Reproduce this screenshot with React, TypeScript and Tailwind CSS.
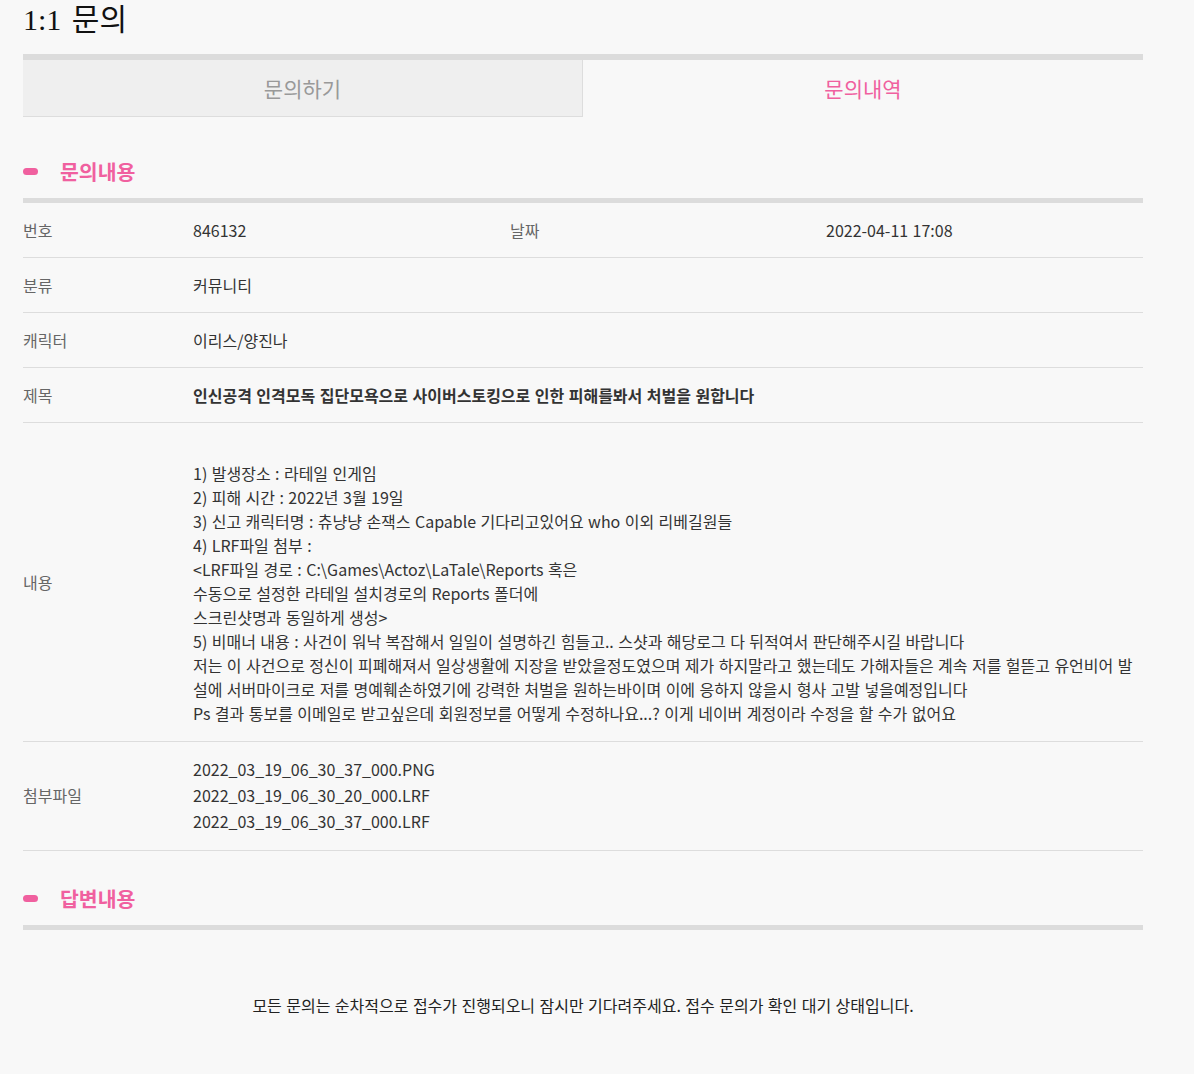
import React from "react";

const PINK = "text-[#f0609f]";

function SectionHeader({ title, className }: { title: string; className?: string }) {
  return (
    <div className={className}>
      <div className="h-[52px] flex items-center pb-[2px]">
        <span className="w-[15px] h-[7px] rounded-full bg-[#f0609f] mr-[22px]" />
        <span className={`text-[20.5px] font-bold ${PINK}`}>{title}</span>
      </div>
      <div className="h-[5px] bg-[#dcdcdc]" />
    </div>
  );
}

function Row({ label, children, className }: { label: string; children: React.ReactNode; className?: string }) {
  return (
    <div className={`flex items-center border-b border-[#dddddd] ${className ?? "h-[55px]"}`}>
      <div className="w-[170px] shrink-0 text-[#666]">{label}</div>
      <div className="flex-1 min-w-0 text-[#333]">{children}</div>
    </div>
  );
}

const contentLines = [
  "1) 발생장소 : 라테일 인게임",
  "2) 피해 시간 : 2022년 3월 19일",
  "3) 신고 캐릭터명 : 츄냥냥 손잭스 Capable 기다리고있어요 who 이외 리베길원들",
  "4) LRF파일 첨부 :",
  "<LRF파일 경로 : C:\\Games\\Actoz\\LaTale\\Reports 혹은",
  "수동으로 설정한 라테일 설치경로의 Reports 폴더에",
  "스크린샷명과 동일하게 생성>",
  "5) 비매너 내용 : 사건이 워낙 복잡해서 일일이 설명하긴 힘들고.. 스샷과 해당로그 다 뒤적여서 판단해주시길 바랍니다",
  "저는 이 사건으로 정신이 피폐해져서 일상생활에 지장을 받았을정도였으며 제가 하지말라고 했는데도 가해자들은 계속 저를 헐뜯고 유언비어 발",
  "설에 서버마이크로 저를 명예훼손하였기에 강력한 처벌을 원하는바이며 이에 응하지 않을시 형사 고발 넣을예정입니다",
  "Ps 결과 통보를 이메일로 받고싶은데 회원정보를 어떻게 수정하나요...? 이게 네이버 계정이라 수정을 할 수가 없어요",
];

const files = [
  "2022_03_19_06_30_37_000.PNG",
  "2022_03_19_06_30_20_000.LRF",
  "2022_03_19_06_30_37_000.LRF",
];

export default function App() {
  return (
    <div
      className="min-h-[1074px] bg-[#f8f8f8] text-[16px] [word-spacing:0.85px]"
      style={{ fontFamily: '"Noto Sans CJK KR", "Noto Sans", sans-serif' }}
    >
      <div className="w-[1120px] ml-[23px] pb-[56px]">
        <h1
          className="text-[30px] leading-[40px] text-[#111] mb-[14px] [word-spacing:3px]"
          style={{ fontFamily: '"Liberation Serif", "Noto Sans CJK KR", serif' }}
        >
          1:1 문의
        </h1>

        <div className="border-t-[6px] border-[#dcdcdc] grid grid-cols-2">
          <div className="h-[57px] bg-[#efefef] border-r border-b border-[#dddddd] flex items-center justify-center text-[21px] text-[#999] pt-[2px]">
            문의하기
          </div>
          <div className={`h-[57px] flex items-center justify-center text-[21px] ${PINK}`}>문의내역</div>
        </div>

        <SectionHeader title="문의내용" className="mt-[29px]" />

        <div className="flex items-center h-[55px] border-b border-[#dddddd]">
          <div className="w-[170px] shrink-0 text-[#666]">번호</div>
          <div className="w-[317px] shrink-0 text-[#333]">846132</div>
          <div className="w-[316px] shrink-0 text-[#666]">날짜</div>
          <div className="flex-1 text-[#333]">2022-04-11 17:08</div>
        </div>
        <Row label="분류">커뮤니티</Row>
        <Row label="캐릭터">이리스/양진나</Row>
        <Row label="제목">
          <span className="font-bold">인신공격 인격모독 집단모욕으로 사이버스토킹으로 인한 피해를봐서 처벌을 원합니다</span>
        </Row>
        <Row label="내용" className="pt-[15px] pb-[16px]">
          <div className="leading-[24px] pt-[23px]">
            {contentLines.map((l, i) => (
              <div key={i} className="whitespace-nowrap">
                {l}
              </div>
            ))}
          </div>
        </Row>
        <Row label="첨부파일" className="pt-[14px] pb-[16px]">
          <div className="leading-[26px]">
            {files.map((f) => (
              <div key={f}>{f}</div>
            ))}
          </div>
        </Row>

        <SectionHeader title="답변내용" className="mt-[22px]" />

        <p className="mt-[63px] text-center leading-[24px] text-[#222]">
          모든 문의는 순차적으로 접수가 진행되오니 잠시만 기다려주세요. 접수 문의가 확인 대기 상태입니다.
        </p>
      </div>
    </div>
  );
}
